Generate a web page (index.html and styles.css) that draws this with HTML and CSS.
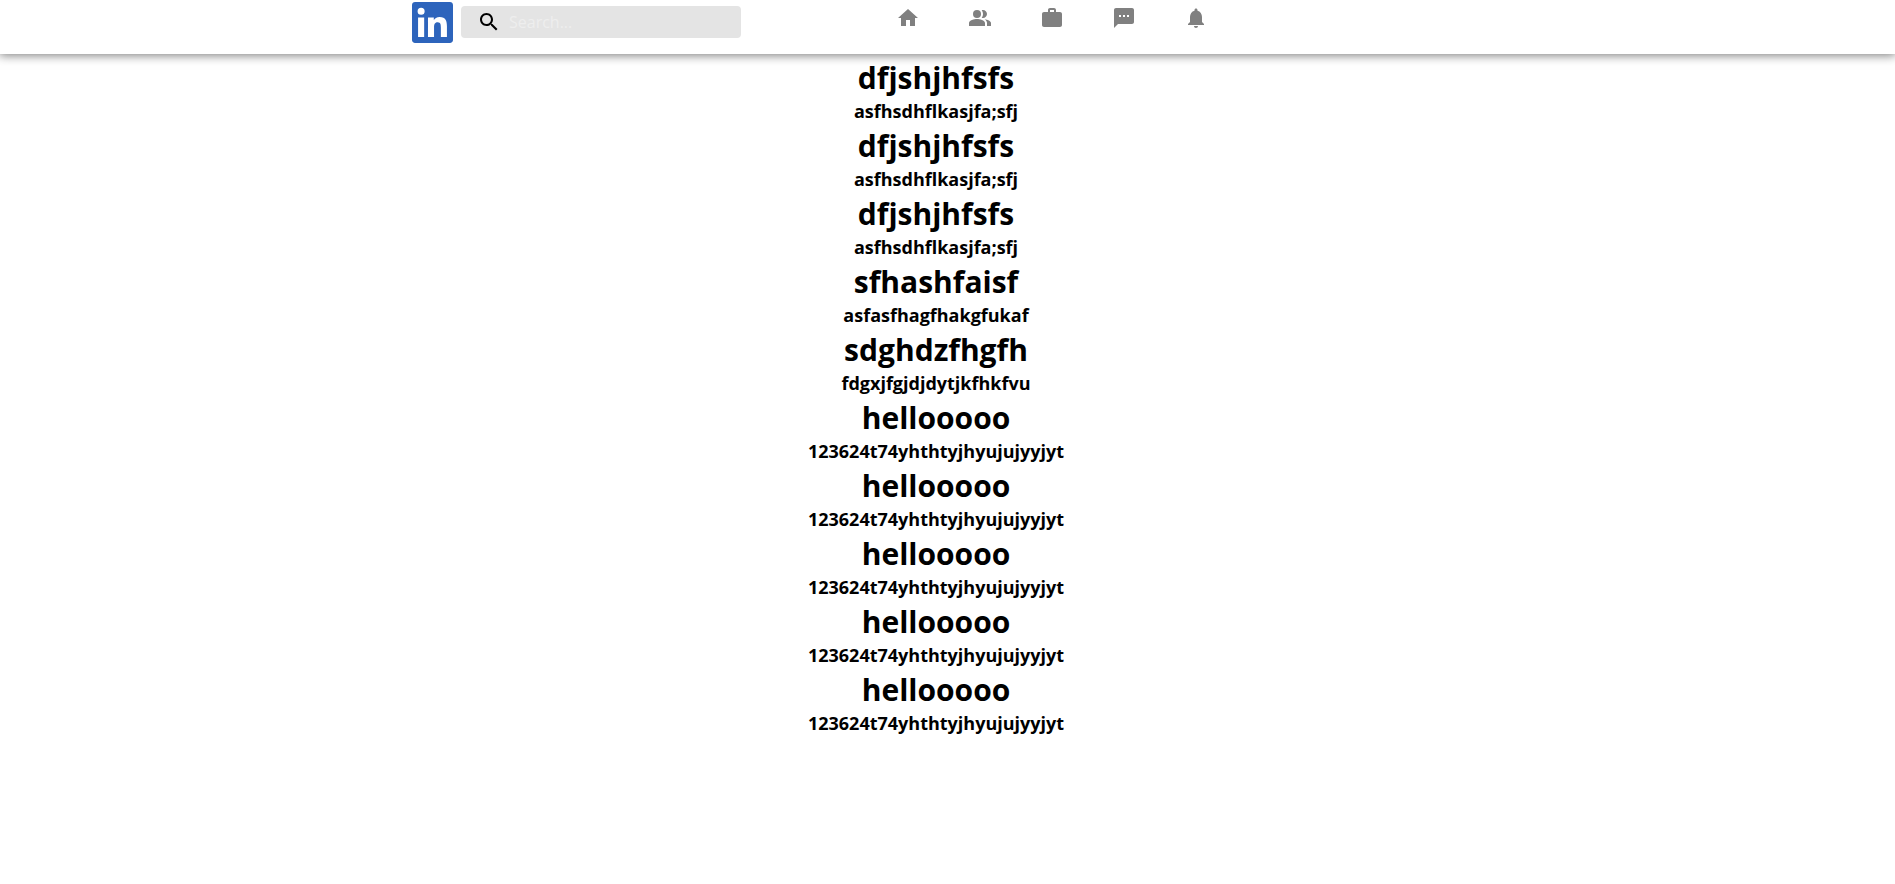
FILE: index.html
```html
<!DOCTYPE html>
<html lang="en">
<head>
<meta charset="utf-8">
<meta name="viewport" content="width=device-width, initial-scale=1">
<title>LinkedIn</title>
<link rel="stylesheet" href="styles.css">
</head>
<body>
<header class="header">
  <div class="header-inner">
    <a class="logo" href="#" aria-label="LinkedIn">
      <svg viewBox="0 0 24 24" aria-hidden="true"><rect x="1" y="1" width="22" height="22" fill="#fff"/><path d="M20.447 20.452h-3.554v-5.569c0-1.328-.027-3.037-1.852-3.037-1.853 0-2.136 1.445-2.136 2.939v5.667H9.351V9h3.414v1.561h.046c.477-.9 1.637-1.85 3.37-1.85 3.601 0 4.267 2.37 4.267 5.455v6.286zM5.337 7.433a2.062 2.062 0 0 1-2.063-2.065 2.064 2.064 0 1 1 2.063 2.065zm1.782 13.019H3.555V9h3.564v11.452zM22.225 0H1.771C.792 0 0 .774 0 1.729v20.542C0 23.227.792 24 1.771 24h20.451C23.2 24 24 23.227 24 22.271V1.729C24 .774 23.2 0 22.222 0h.003z"/></svg>
    </a>
    <label class="search">
      <svg class="icon" viewBox="0 0 24 24" aria-hidden="true"><path d="M15.5 14h-.79l-.28-.27C15.41 12.59 16 11.11 16 9.5 16 5.91 13.09 3 9.5 3S3 5.91 3 9.5 5.91 16 9.5 16c1.61 0 3.09-.59 4.23-1.57l.27.28v.79l5 4.99L20.49 19l-4.99-5zm-6 0C7.01 14 5 11.99 5 9.5S7.01 5 9.5 5 14 7.01 14 9.5 11.99 14 9.5 14z"/></svg>
      <input class="search-input" type="text" placeholder="Search..." aria-label="Search">
    </label>
    <nav class="nav">
      <a class="nav-link" href="#" aria-label="Home"><svg class="icon" viewBox="0 0 24 24"><path d="M10 20v-6h4v6h5v-8h3L12 3 2 12h3v8z"/></svg></a>
      <a class="nav-link" href="#" aria-label="My network"><svg class="icon" viewBox="0 0 24 24"><path d="M16.67 13.13C18.04 14.06 19 15.32 19 17v3h4v-3c0-2.18-3.57-3.47-6.33-3.87z"/><circle cx="9" cy="8" r="4"/><path d="M15 12c2.21 0 4-1.79 4-4s-1.79-4-4-4c-.47 0-.91.1-1.33.24C14.5 5.27 15 6.58 15 8s-.5 2.73-1.33 3.76c.42.14.86.24 1.33.24zM9 13c-2.67 0-8 1.34-8 4v3h16v-3c0-2.66-5.33-4-8-4z"/></svg></a>
      <a class="nav-link" href="#" aria-label="Jobs"><svg class="icon" viewBox="0 0 24 24"><path d="M20 6h-4V4c0-1.11-.89-2-2-2h-4c-1.11 0-2 .89-2 2v2H4c-1.11 0-1.99.89-1.99 2L2 19c0 1.11.89 2 2 2h16c1.11 0 2-.89 2-2V8c0-1.11-.89-2-2-2zm-6 0h-4V4h4v2z"/></svg></a>
      <a class="nav-link" href="#" aria-label="Messaging"><svg class="icon" viewBox="0 0 24 24"><path d="M20 2H4c-1.1 0-1.99.9-1.99 2L2 22l4-4h14c1.1 0 2-.9 2-2V4c0-1.1-.9-2-2-2zM9 11H7V9h2v2zm4 0h-2V9h2v2zm4 0h-2V9h2v2z"/></svg></a>
      <a class="nav-link" href="#" aria-label="Notifications"><svg class="icon" viewBox="0 0 24 24"><path d="M12 22c1.1 0 2-.9 2-2h-4c0 1.1.89 2 2 2zm6-6v-5c0-3.07-1.64-5.64-4.5-6.32V4c0-.83-.67-1.5-1.5-1.5s-1.5.67-1.5 1.5v.68C7.63 5.36 6 7.92 6 11v5l-2 2v1h16v-1l-2-2z"/></svg></a>
    </nav>
  </div>
</header>
<main class="posts">
  <article class="post"><h1 class="post-title">dfjshjhfsfs</h1><h3 class="post-text">asfhsdhflkasjfa;sfj</h3></article>
  <article class="post"><h1 class="post-title">dfjshjhfsfs</h1><h3 class="post-text">asfhsdhflkasjfa;sfj</h3></article>
  <article class="post"><h1 class="post-title">dfjshjhfsfs</h1><h3 class="post-text">asfhsdhflkasjfa;sfj</h3></article>
  <article class="post"><h1 class="post-title">sfhashfaisf</h1><h3 class="post-text">asfasfhagfhakgfukaf</h3></article>
  <article class="post"><h1 class="post-title">sdghdzfhgfh</h1><h3 class="post-text">fdgxjfgjdjdytjkfhkfvu</h3></article>
  <article class="post"><h1 class="post-title">hellooooo</h1><h3 class="post-text">123624t74yhthtyjhyujujyyjyt</h3></article>
  <article class="post"><h1 class="post-title">hellooooo</h1><h3 class="post-text">123624t74yhthtyjhyujujyyjyt</h3></article>
  <article class="post"><h1 class="post-title">hellooooo</h1><h3 class="post-text">123624t74yhthtyjhyujujyyjyt</h3></article>
  <article class="post"><h1 class="post-title">hellooooo</h1><h3 class="post-text">123624t74yhthtyjhyujujyyjyt</h3></article>
  <article class="post"><h1 class="post-title">hellooooo</h1><h3 class="post-text">123624t74yhthtyjhyujujyyjyt</h3></article>
</main>
</body>
</html>
```
FILE: styles.css
```css
* {
  margin: 0;
  padding: 0;
  box-sizing: border-box;
}

body {
  background: #fff;
  color: #000;
  font-family: "Segoe UI", "Open Sans", "Noto Sans", sans-serif;
}

.header {
  height: 54px;
  background: #fff;
  box-shadow: 0 0 10px 1px rgba(0, 0, 0, 0.55);
}

.header-inner {
  display: flex;
  align-items: flex-start;
  max-width: 1071px;
  margin: 0 auto;
}

.logo {
  width: 41px;
  margin: 2px 8px 0 0;
}

.logo svg {
  display: block;
  width: 100%;
  fill: #2d64bc;
}

.search {
  display: flex;
  align-items: center;
  gap: 8px;
  width: 280px;
  height: 32px;
  margin-top: 6px;
  padding: 0 16px;
  border-radius: 4px;
  background: #e4e4e4;
}

.icon {
  display: block;
  flex: none;
  width: 24px;
  height: 24px;
  fill: currentColor;
}

.search-input {
  flex: 1;
  min-width: 0;
  border: 0;
  outline: 0;
  background: transparent;
  font: 16px "Segoe UI", "Open Sans", sans-serif;
}

.search-input::placeholder {
  color: #eee;
  opacity: 1;
}

.nav {
  display: flex;
  gap: 48px;
  margin: 6px 0 0 155px;
}

.nav-link {
  color: #808080;
}

.posts {
  padding: 2px 23px 0 0;
  text-align: center;
}

.post-title {
  font-size: 30px;
  line-height: 43px;
  font-weight: 700;
}

.post-text {
  font-size: 18px;
  line-height: 25px;
  font-weight: 700;
}
```
